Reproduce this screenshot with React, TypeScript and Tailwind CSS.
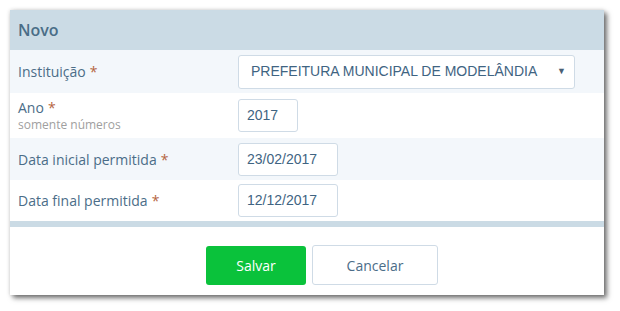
import React from "react";

const Req = () => <span className="text-[#b5653f] ml-[4px]">*</span>;

export default function App() {
  return (
    <div className="w-[620px] h-[311px] bg-white pt-[10px] pl-[10px]" style={{ fontFamily: '"Open Sans", sans-serif' }}>
      <div className="w-[594px] h-[285px] bg-white flex flex-col shadow-[3px_3px_5px_rgba(0,0,0,0.55),0_0_4px_rgba(0,0,0,0.15)]">
        <div className="h-[40px] bg-[#cbdbe5] flex items-center pl-[8px] text-[16px] font-semibold text-[#4a6d87]">Novo</div>
        <div className="h-[43px] bg-[#f3f7fb] flex items-center">
          <div className="w-[228px] pl-[8px] text-[14px] text-[#4b6d88]">Instituição<Req /></div>
          <div className="w-[337px] h-[34px] bg-white border border-[#cfdbe6] rounded-[3px] flex items-center pl-[12px] pr-[8px] justify-between text-[14px] text-[#3f6482]" style={{ fontFamily: '"Liberation Sans", Arial, sans-serif' }}>
            <span>PREFEITURA MUNICIPAL DE MODELÂNDIA</span>
            <span className="text-[9px] text-[#4a6074]">▼</span>
          </div>
        </div>
        <div className="h-[45px] bg-white flex items-center">
          <div className="w-[228px] pl-[8px] flex flex-col mt-[1px]">
            <span className="text-[14px] leading-[18px] text-[#4b6d88]">Ano<Req /></span>
            <span className="text-[12px] leading-[16px] text-[#a0a0a0]">somente números</span>
          </div>
          <div className="w-[60px] h-[33px] border border-[#cfdbe6] rounded-[3px] flex items-center pl-[8px] text-[14px] text-[#3f6482]" style={{ fontFamily: '"Liberation Sans", Arial, sans-serif' }}>2017</div>
        </div>
        <div className="h-[42px] bg-[#f3f7fb] flex items-center">
          <div className="w-[228px] pl-[8px] text-[14px] text-[#4b6d88]">Data inicial permitida<Req /></div>
          <div className="w-[100px] h-[33px] bg-white border border-[#cfdbe6] rounded-[3px] flex items-center pl-[8px] text-[14px] text-[#3f6482]" style={{ fontFamily: '"Liberation Sans", Arial, sans-serif' }}>23/02/2017</div>
        </div>
        <div className="h-[41px] bg-white flex items-center">
          <div className="w-[228px] pl-[8px] text-[14px] text-[#4b6d88]">Data final permitida<Req /></div>
          <div className="w-[100px] h-[33px] bg-white border border-[#cfdbe6] rounded-[3px] flex items-center pl-[8px] text-[14px] text-[#3f6482]" style={{ fontFamily: '"Liberation Sans", Arial, sans-serif' }}>12/12/2017</div>
        </div>
        <div className="h-[6px] bg-[#cbdbe5]" />
        <div className="flex-1 flex items-start pt-[18px] pl-[196px] gap-[6px]">
          <div className="w-[100px] h-[39px] mt-[1px] bg-[#0ac23b] rounded-[3px] flex items-center justify-center text-[14px] text-white">Salvar</div>
          <div className="w-[126px] h-[40px] bg-white border border-[#cfdbe6] rounded-[3px] flex items-center justify-center text-[14px] text-[#4b6d88]">Cancelar</div>
        </div>
      </div>
    </div>
  );
}
